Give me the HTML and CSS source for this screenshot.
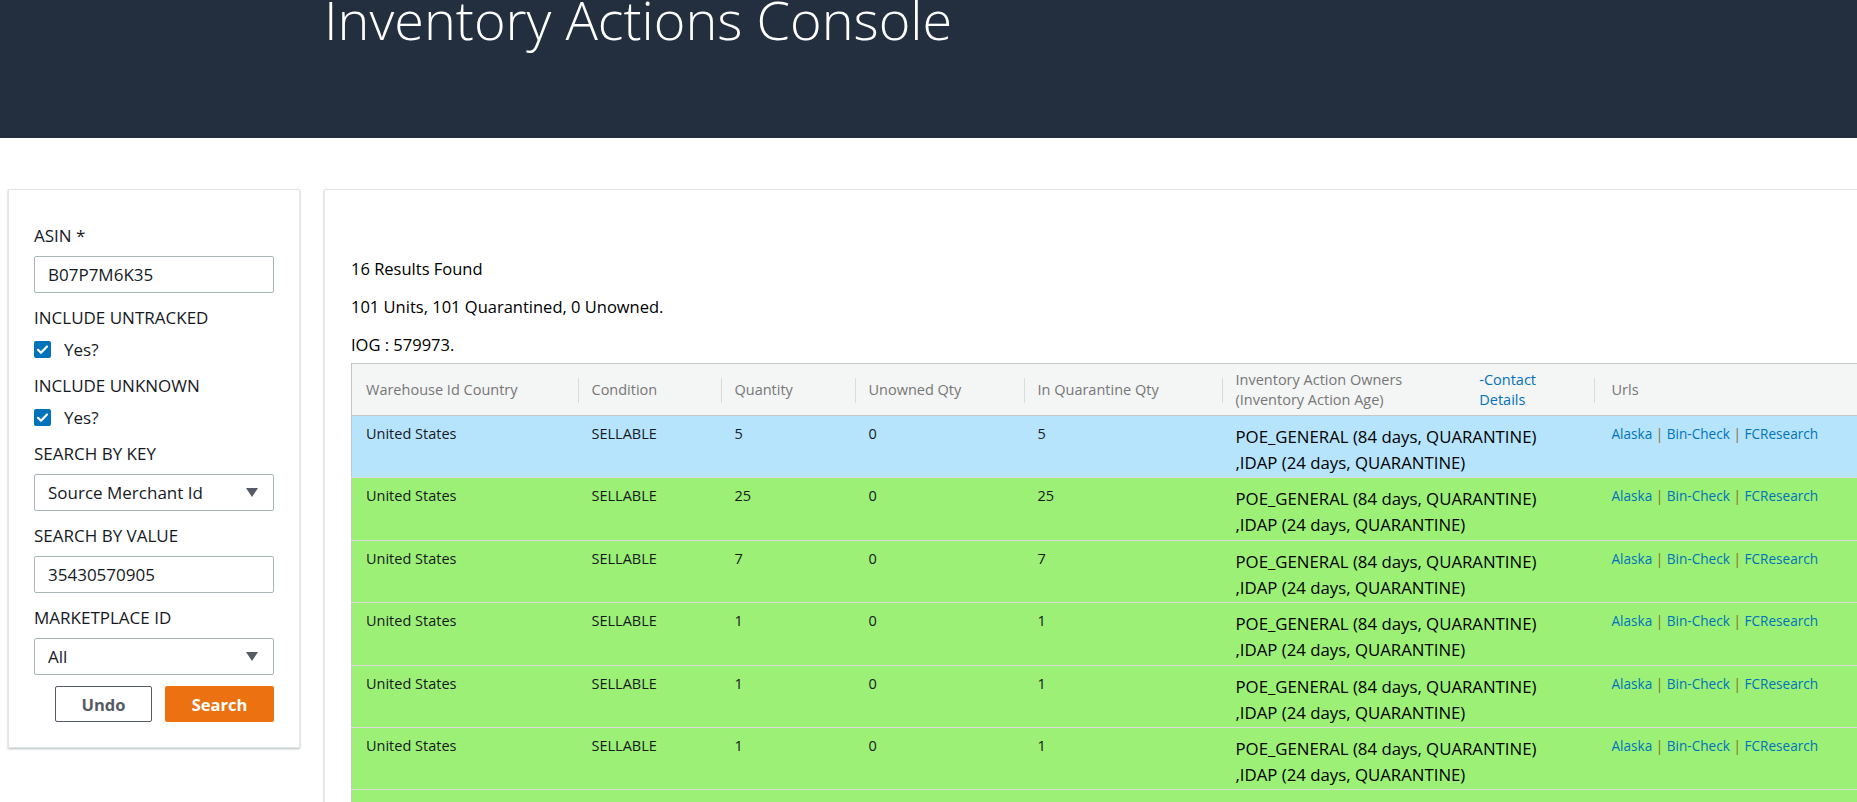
FILE: index.html
```html
<!DOCTYPE html>
<html lang="en">
<head>
    <meta charset="UTF-8">
    <meta name="viewport" content="width=device-width, initial-scale=1.0">
    <title>Inventory Actions Console</title>
    <link rel="stylesheet" href="styles.css">
</head>
<body>
    <header class="topbar">
        <h1>Inventory Actions Console</h1>
    </header>

    <div class="layout">
        <!-- Search filters -->
        <form class="filters">
            <div class="field">
                <label for="asin">ASIN *</label>
                <input type="text" id="asin" class="text-input" value="B07P7M6K35">
            </div>
            <div class="field">
                <label>INCLUDE UNTRACKED</label>
                <div class="check-row">
                    <span class="check"><svg viewBox="0 0 17 17" width="17" height="17"><path d="M4 8.8l3 3 6-6.3" fill="none" stroke="#fff" stroke-width="2.2" stroke-linecap="round" stroke-linejoin="round"/></svg></span>
                    <span>Yes?</span>
                </div>
            </div>
            <div class="field">
                <label>INCLUDE UNKNOWN</label>
                <div class="check-row">
                    <span class="check"><svg viewBox="0 0 17 17" width="17" height="17"><path d="M4 8.8l3 3 6-6.3" fill="none" stroke="#fff" stroke-width="2.2" stroke-linecap="round" stroke-linejoin="round"/></svg></span>
                    <span>Yes?</span>
                </div>
            </div>
            <div class="field">
                <label>SEARCH BY KEY</label>
                <div class="select">
                    <span>Source Merchant Id</span>
                    <span class="caret"></span>
                </div>
            </div>
            <div class="field">
                <label for="searchValue">SEARCH BY VALUE</label>
                <input type="text" id="searchValue" class="text-input" value="35430570905">
            </div>
            <div class="field">
                <label>MARKETPLACE ID</label>
                <div class="select">
                    <span>All</span>
                    <span class="caret"></span>
                </div>
            </div>
            <div class="actions">
                <button type="button" class="btn btn-undo">Undo</button>
                <button type="button" class="btn btn-search">Search</button>
            </div>
        </form>

        <!-- Results -->
        <section class="results">
            <p class="summary">16 Results Found</p>
            <p class="summary">101 Units, 101 Quarantined, 0 Unowned.</p>
            <p class="summary last">IOG : 579973.</p>

            <table class="grid">
                <thead>
                    <tr>
                        <th class="c-country">Warehouse Id Country</th>
                        <th class="c-cond">Condition</th>
                        <th class="c-qty">Quantity</th>
                        <th class="c-unowned">Unowned Qty</th>
                        <th class="c-quar">In Quarantine Qty</th>
                        <th class="c-owners">
                            <div class="owners-head">
                                <span>Inventory Action Owners<br>(Inventory Action Age)</span>
                                <a href="#" class="contact">-Contact<br>Details</a>
                            </div>
                        </th>
                        <th class="c-urls">Urls</th>
                    </tr>
                </thead>
                <tbody>
                    <tr class="row-selected">
                        <td>United States</td><td>SELLABLE</td><td>5</td><td>0</td><td>5</td>
                        <td class="owners">POE_GENERAL (84 days, QUARANTINE)<br>,IDAP (24 days, QUARANTINE)</td>
                        <td class="urls"><a href="#">Alaska</a> <span class="sep">|</span> <a href="#">Bin-Check</a> <span class="sep">|</span> <a href="#">FCResearch</a></td>
                    </tr>
                    <tr class="row-ok">
                        <td>United States</td><td>SELLABLE</td><td>25</td><td>0</td><td>25</td>
                        <td class="owners">POE_GENERAL (84 days, QUARANTINE)<br>,IDAP (24 days, QUARANTINE)</td>
                        <td class="urls"><a href="#">Alaska</a> <span class="sep">|</span> <a href="#">Bin-Check</a> <span class="sep">|</span> <a href="#">FCResearch</a></td>
                    </tr>
                    <tr class="row-ok">
                        <td>United States</td><td>SELLABLE</td><td>7</td><td>0</td><td>7</td>
                        <td class="owners">POE_GENERAL (84 days, QUARANTINE)<br>,IDAP (24 days, QUARANTINE)</td>
                        <td class="urls"><a href="#">Alaska</a> <span class="sep">|</span> <a href="#">Bin-Check</a> <span class="sep">|</span> <a href="#">FCResearch</a></td>
                    </tr>
                    <tr class="row-ok">
                        <td>United States</td><td>SELLABLE</td><td>1</td><td>0</td><td>1</td>
                        <td class="owners">POE_GENERAL (84 days, QUARANTINE)<br>,IDAP (24 days, QUARANTINE)</td>
                        <td class="urls"><a href="#">Alaska</a> <span class="sep">|</span> <a href="#">Bin-Check</a> <span class="sep">|</span> <a href="#">FCResearch</a></td>
                    </tr>
                    <tr class="row-ok">
                        <td>United States</td><td>SELLABLE</td><td>1</td><td>0</td><td>1</td>
                        <td class="owners">POE_GENERAL (84 days, QUARANTINE)<br>,IDAP (24 days, QUARANTINE)</td>
                        <td class="urls"><a href="#">Alaska</a> <span class="sep">|</span> <a href="#">Bin-Check</a> <span class="sep">|</span> <a href="#">FCResearch</a></td>
                    </tr>
                    <tr class="row-ok">
                        <td>United States</td><td>SELLABLE</td><td>1</td><td>0</td><td>1</td>
                        <td class="owners">POE_GENERAL (84 days, QUARANTINE)<br>,IDAP (24 days, QUARANTINE)</td>
                        <td class="urls"><a href="#">Alaska</a> <span class="sep">|</span> <a href="#">Bin-Check</a> <span class="sep">|</span> <a href="#">FCResearch</a></td>
                    </tr>
                    <tr class="row-ok">
                        <td>United States</td><td>SELLABLE</td><td>1</td><td>0</td><td>1</td>
                        <td class="owners">POE_GENERAL (84 days, QUARANTINE)<br>,IDAP (24 days, QUARANTINE)</td>
                        <td class="urls"><a href="#">Alaska</a> <span class="sep">|</span> <a href="#">Bin-Check</a> <span class="sep">|</span> <a href="#">FCResearch</a></td>
                    </tr>
                </tbody>
            </table>
        </section>
    </div>
</body>
</html>
```

FILE: styles.css
```css
* {
    box-sizing: border-box;
}

html, body {
    margin: 0;
    padding: 0;
}

body {
    font-family: "Open Sans", "Noto Sans", sans-serif;
    color: #16191f;
    background-color: #ffffff;
    height: 802px;
    overflow: hidden;
}

/* Top bar */
.topbar {
    display: grid;
    grid-template-columns: 292px 1fr;
    column-gap: 24px;
    height: 138px;
    padding-left: 8px;
    background-color: #232f3e;
    overflow: hidden;
}

.topbar h1 {
    grid-column: 2;
    margin: -8px 0 0;
    font-size: 54px;
    line-height: 54px;
    font-weight: 300;
    color: #ffffff;
}

/* Page layout */
.layout {
    display: grid;
    grid-template-columns: 292px 1560px;
    column-gap: 24px;
    align-items: start;
    padding: 51px 0 0 8px;
}

/* Filter panel */
.filters {
    padding: 36px 25px 25px;
    border: 1px solid #e3e6e6;
    background-color: #ffffff;
    box-shadow: 0 1px 2px rgba(0, 28, 36, 0.3);
}

.field {
    margin-bottom: 15px;
}

.field label {
    display: block;
    margin-bottom: 10px;
    font-size: 17px;
    line-height: 20px;
    color: #16191f;
}

.text-input,
.select {
    display: flex;
    align-items: center;
    width: 100%;
    height: 37px;
    padding: 0 13px;
    border: 1px solid #aab7b8;
    border-radius: 2px;
    font-family: "Open Sans", sans-serif;
    font-size: 17px;
    color: #16191f;
    background-color: #ffffff;
}

.select {
    justify-content: space-between;
}

.caret {
    width: 0;
    height: 0;
    margin-right: 2px;
    border-left: 6px solid transparent;
    border-right: 6px solid transparent;
    border-top: 9px solid #545b64;
}

.check-row {
    display: flex;
    align-items: center;
    gap: 13px;
    height: 23px;
    font-size: 17px;
}

.check {
    display: block;
    width: 17px;
    height: 17px;
    border-radius: 2px;
    background-color: #0073bb;
}

.check svg {
    display: block;
}

.actions {
    display: flex;
    justify-content: flex-end;
    gap: 13px;
    margin-top: -4px;
}

.btn {
    height: 36px;
    border-radius: 2px;
    font-family: "Open Sans", sans-serif;
    font-size: 16.5px;
    font-weight: 700;
    cursor: pointer;
}

.btn-undo {
    width: 97px;
    border: 1px solid #545b64;
    background-color: #ffffff;
    color: #545b64;
}

.btn-search {
    width: 109px;
    border: none;
    background-color: #ec7211;
    color: #ffffff;
}

/* Results panel */
.results {
    height: 700px;
    padding: 66px 26px 0;
    border: 1px solid #e3e6e6;
    box-shadow: 0 1px 2px rgba(0, 28, 36, 0.3);
}

.summary {
    margin: 0 0 12px;
    font-size: 16.5px;
    line-height: 26px;
    color: #000000;
}

.summary.last {
    margin-bottom: 5px;
}

/* Table */
.grid {
    width: 1506px;
    border-collapse: collapse;
    border: 1px solid #c6c6c6;
    table-layout: fixed;
    font-size: 14.5px;
}

.grid th {
    position: relative;
    height: 52px;
    padding: 0 14px;
    background-color: #f4f5f5;
    border-bottom: 1px solid #c6c6c6;
    font-weight: 400;
    text-align: left;
    line-height: 20px;
    color: #777777;
}

.grid th + th::before {
    content: "";
    position: absolute;
    left: 0;
    top: 14px;
    height: 25px;
    border-left: 1px solid #d9dcdc;
}

.c-country { width: 226px; }
.c-cond { width: 143px; }
.c-qty { width: 134px; }
.c-unowned { width: 169px; }
.c-quar { width: 198px; }
.c-owners { width: 372px; }
.c-urls { width: 264px; padding-left: 18px !important; }

.owners-head {
    display: flex;
    gap: 77px;
}

.contact {
    color: #0073bb;
    text-decoration: none;
}

.grid td {
    padding: 8px 14px 1.4px;
    vertical-align: top;
    line-height: 20px;
    color: #16191f;
    border-bottom: 1px solid #dcdcdc;
}

.grid td.owners {
    font-size: 16.8px;
    line-height: 26px;
    color: #000000;
}

.grid td.urls {
    padding-left: 18px;
    font-size: 13.6px;
}

.urls a {
    color: #0073bb;
    text-decoration: none;
}

.urls .sep {
    color: #856c1e;
}

.row-selected td {
    background-color: #b6e4fd;
}

.row-ok td {
    background-color: #9cf076;
}
```
